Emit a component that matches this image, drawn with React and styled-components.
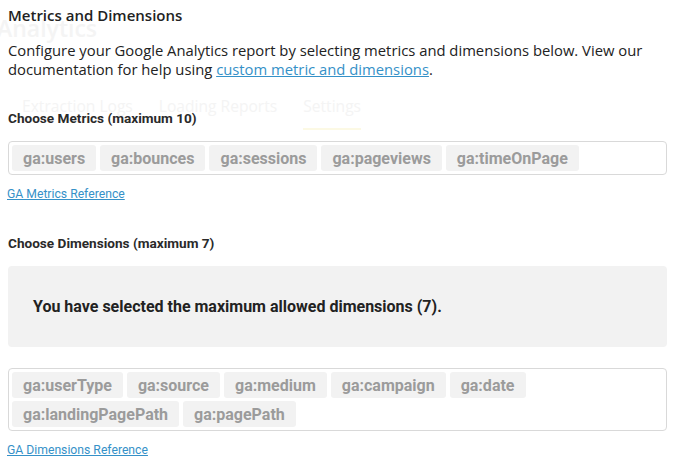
import styled, { createGlobalStyle } from "styled-components";

const GlobalStyle = createGlobalStyle`
  html, body {
    margin: 0;
    padding: 0;
    background: #fff;
  }
  body {
    font-family: "Open Sans", "Noto Sans", sans-serif;
    color: #222;
  }
`;

const narrow = `"Roboto", "Liberation Sans", sans-serif`;

const Page = styled.div`
  position: relative;
  width: 686px;
  height: 461px;
  overflow: hidden;
`;

// faded page that sits behind the dialog
const Backdrop = styled.div`
  position: absolute;
  inset: 0;
  color: #f4f4f4;
  pointer-events: none;
`;

const GhostTitle = styled.div`
  position: absolute;
  left: -3px;
  top: 12px;
  font-size: 23px;
  font-weight: 600;
`;

const GhostTabs = styled.div`
  position: absolute;
  left: 22px;
  top: 95px;
  display: flex;
  gap: 26px;
  font-size: 15.6px;
`;

const GhostTab = styled.span`
  padding-bottom: 11px;
  border-bottom: 2px solid ${(p) => (p.active ? "#fcf9e4" : "transparent")};
`;

const Dialog = styled.div`
  position: relative;
  padding: 5px 19px 0 8px;
`;

const Title = styled.h2`
  margin: 0;
  font-size: 15px;
  line-height: 20px;
  font-weight: 600;
  color: #222;
`;

const Intro = styled.p`
  margin: 16px 0 0;
  font-size: 14.8px;
  line-height: 19px;
  color: #222;
`;

const Link = styled.a`
  color: #3591c8;
  text-decoration: underline;
  cursor: pointer;
`;

const Label = styled.div`
  margin-top: ${(p) => p.top}px;
  font-family: ${narrow};
  font-size: 13.6px;
  line-height: 18px;
  font-weight: 700;
  color: #2a2a2a;
`;

const TagBox = styled.div`
  margin-top: ${(p) => p.top || 14}px;
  display: flex;
  flex-wrap: wrap;
  gap: 3px 4px;
  padding: 3px;
  border: 1px solid #d9d9d9;
  border-radius: 4px;
`;

const Tag = styled.span`
  height: 26px;
  padding: 0 11px;
  display: flex;
  align-items: center;
  background: #f2f2f2;
  border-radius: 3px;
  font-family: ${narrow};
  font-size: 16px;
  font-weight: 700;
  color: #9b9b9b;
`;

const RefLink = styled(Link)`
  display: block;
  margin-top: 11px;
  margin-left: -1px;
  font-family: ${narrow};
  font-size: 12.2px;
  line-height: 16px;
`;

const Notice = styled.div`
  margin-top: 14px;
  height: 81px;
  display: flex;
  align-items: center;
  padding-left: 25px;
  background: #f2f2f2;
  border-radius: 4px;
  font-family: ${narrow};
  font-size: 16px;
  font-weight: 700;
  color: #222;
`;

const metrics = ["ga:users", "ga:bounces", "ga:sessions", "ga:pageviews", "ga:timeOnPage"];
const dimensions = [
  "ga:userType",
  "ga:source",
  "ga:medium",
  "ga:campaign",
  "ga:date",
  "ga:landingPagePath",
  "ga:pagePath",
];

const App = () => {
  return (
    <>
      <GlobalStyle />
      <Page>
        <Backdrop>
          <GhostTitle>Analytics</GhostTitle>
          <GhostTabs>
            <GhostTab>Extraction Logs</GhostTab>
            <GhostTab>Loading Reports</GhostTab>
            <GhostTab active>Settings</GhostTab>
          </GhostTabs>
        </Backdrop>

        <Dialog>
          <Title>Metrics and Dimensions</Title>
          <Intro>
            Configure your Google Analytics report by selecting metrics and dimensions below. View our
            <br />
            documentation for help using <Link>custom metric and dimensions</Link>.
          </Intro>

          <Label top={30}>Choose Metrics (maximum 10)</Label>
          <TagBox>
            {metrics.map((m) => (
              <Tag key={m}>{m}</Tag>
            ))}
          </TagBox>
          <RefLink>GA Metrics Reference</RefLink>

          <Label top={32}>Choose Dimensions (maximum 7)</Label>
          <Notice>You have selected the maximum allowed dimensions (7).</Notice>
          <TagBox top={21}>
            {dimensions.map((d) => (
              <Tag key={d}>{d}</Tag>
            ))}
          </TagBox>
          <RefLink>GA Dimensions Reference</RefLink>
        </Dialog>
      </Page>
    </>
  );
};

export default App;
